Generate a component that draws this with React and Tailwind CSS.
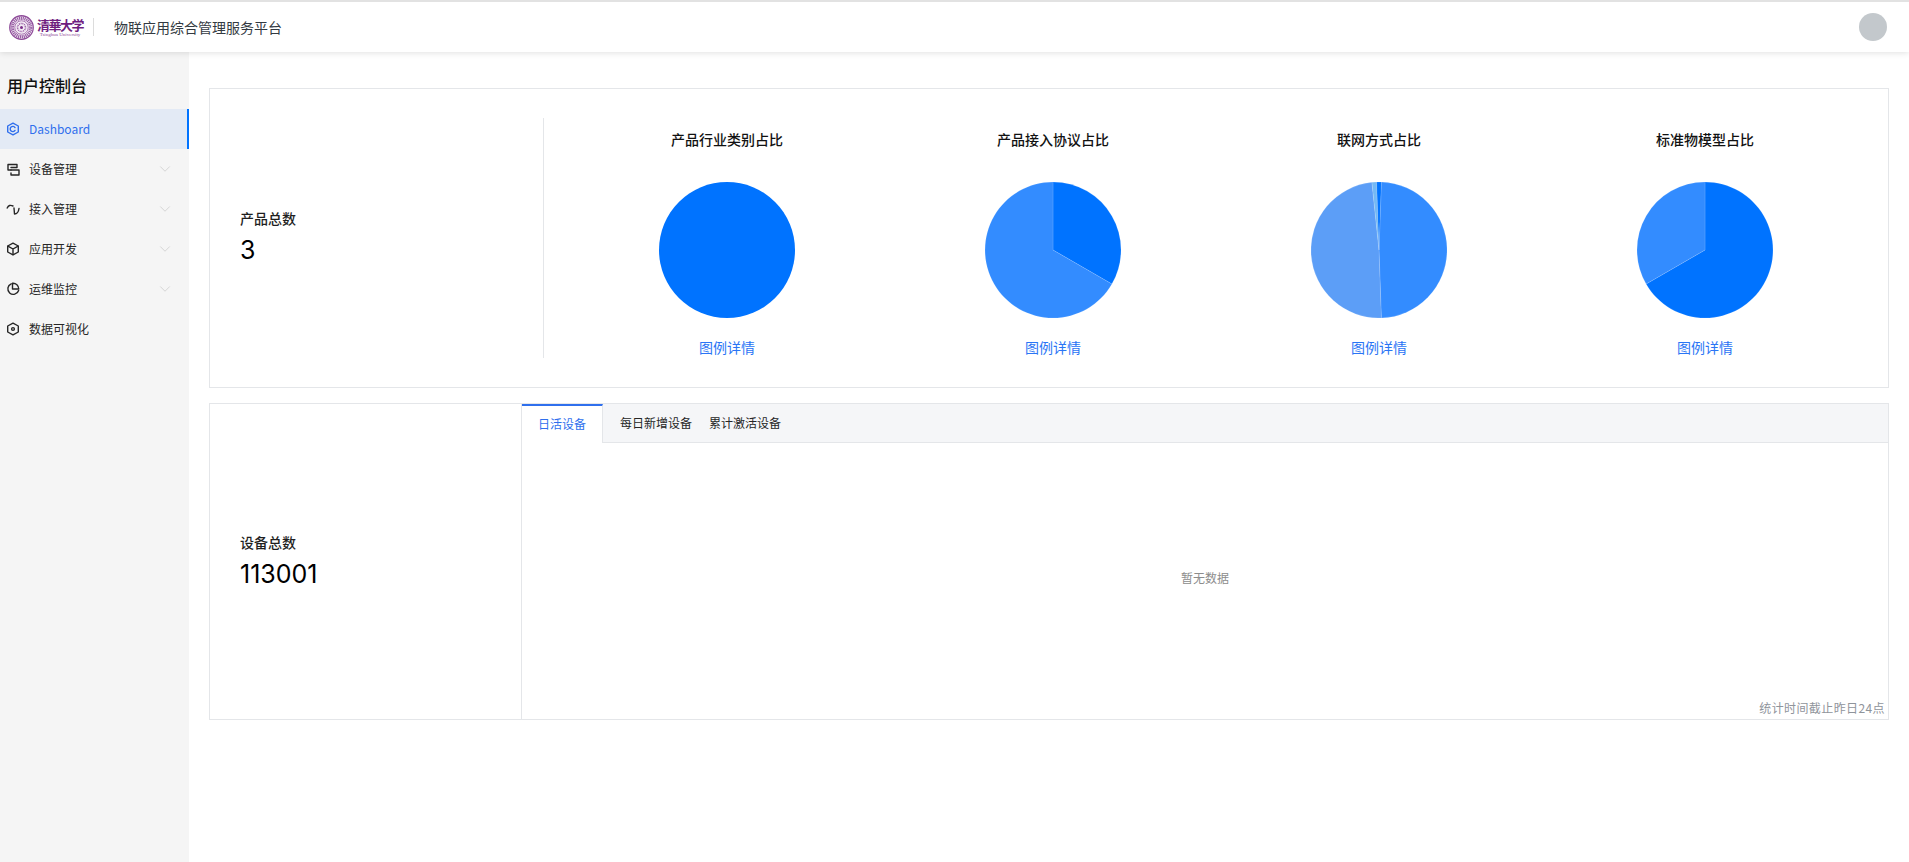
import React from 'react';
import { ChevronDown } from 'lucide-react';

const FONT = "font-['Noto_Sans_CJK_SC','Noto_Sans',sans-serif]";

// 饼图扇区路径
const slicePath = (from, to, r = 68) => {
  const pt = deg => {
    const a = (deg - 90) * Math.PI / 180;
    return `${(r + r * Math.cos(a)).toFixed(2)} ${(r + r * Math.sin(a)).toFixed(2)}`;
  };
  const large = to - from > 180 ? 1 : 0;
  return `M${r} ${r} L${pt(from)} A${r} ${r} 0 ${large} 1 ${pt(to)} Z`;
};

const charts = [
  { title: '产品行业类别占比', full: '#0073ff', slices: [] },
  { title: '产品接入协议占比', slices: [[0, 120, '#0073ff'], [120, 360, '#338cff']] },
  { title: '联网方式占比', slices: [[2, 178, '#338cff'], [178, 354, '#5c9ef7'], [354, 358, '#74b9f5'], [358, 362, '#0073ff']] },
  { title: '标准物模型占比', slices: [[0, 240, '#0073ff'], [240, 360, '#338cff']] }
];

const Pie = ({ chart }) => <svg width="136" height="136" viewBox="0 0 136 136">
    {chart.full && <circle cx="68" cy="68" r="68" fill={chart.full} />}
    {chart.slices.map(s => <path key={s[0]} d={slicePath(s[0], s[1])} fill={s[2]} stroke="#ffffff" strokeOpacity="0.25" strokeWidth="0.5" />)}
  </svg>;

const IconBase = ({ children, color = '#262626' }) => <svg width="14" height="14" viewBox="0 0 14 14" fill="none" stroke={color} strokeWidth="1.4" strokeLinecap="round" strokeLinejoin="round" className="shrink-0">
    {children}
  </svg>;

const menus = [
  { name: '设备管理', arrow: true, icon: <IconBase><path d="M5 8H2V2.5H11V5.5H5" /><path d="M5 8H13V13H5V11" /></IconBase> },
  { name: '接入管理', arrow: true, icon: <IconBase><path d="M1.2 6Q3 2 7 4" /><path d="M8 6L8.5 12C10.5 12 12.5 10 13 6.5" /></IconBase> },
  { name: '应用开发', arrow: true, icon: <IconBase><path d="M7 1.2L12.3 4V10L7 12.8L1.7 10V4Z" /><path d="M1.9 4.2L7 7L12.1 4.2M7 7V12.5" /></IconBase> },
  { name: '运维监控', arrow: true, icon: <IconBase><path d="M5.2 1.8A5.5 5.5 0 1 0 12.6 8.5" /><path d="M6.5 1.2A5.8 5.8 0 0 1 12.8 7H6.5Z" /></IconBase> },
  { name: '数据可视化', arrow: false, icon: <IconBase><path d="M7 1.2L12.3 4V10L7 12.8L1.7 10V4Z" /><circle cx="7" cy="7" r="1.4" /></IconBase> }
];

// 清华校徽
const Emblem = () => <svg width="25" height="25" viewBox="0 0 50 50" className="shrink-0">
    <circle cx="25" cy="25" r="23.5" fill="none" stroke="#8d4a98" strokeWidth="2.5" />
    <circle cx="25" cy="25" r="18.5" fill="none" stroke="#9a5fa6" strokeWidth="7" strokeDasharray="2.5 1.2" />
    <circle cx="25" cy="25" r="13.5" fill="#f3eaf4" stroke="#8d4a98" strokeWidth="1.5" />
    <circle cx="25" cy="25" r="8" fill="none" stroke="#9a5fa6" strokeWidth="3" strokeDasharray="2 1.5" />
    <circle cx="25" cy="25" r="3" fill="#7b2f88" />
  </svg>;

export default function App() {
  return <div className={`${FONT} flex h-[862px] flex-col overflow-hidden bg-white text-[#1f1f1f]`}>
      {/* 顶栏 */}
      <header className="relative z-10 flex h-[52px] shrink-0 items-center border-t-2 border-[#e2e2e2] bg-white pl-[9px] pr-[22px] shadow-[0_1px_6px_rgba(0,0,0,0.12)]">
        <Emblem />
        <div className="ml-[4px] flex w-[44px] flex-col items-center">
          <span className="text-[13px] leading-[15px] font-bold tracking-[-1.5px] whitespace-nowrap text-[#6f1d7f]">清華大学</span>
          <span className="font-['Liberation_Serif',serif] text-[5px] leading-[6px] whitespace-nowrap text-[#8d4a98]">Tsinghua University</span>
        </div>
        <div className="ml-[11px] h-[18px] w-px bg-[#dcdcdc]" />
        <span className="ml-[20px] text-[14px] text-[#333a42]">物联应用综合管理服务平台</span>
        <div className="ml-auto h-[28px] w-[28px] rounded-full bg-[#c3c8cc]" />
      </header>

      <div className="flex min-h-0 flex-1">
        {/* 侧边栏 */}
        <aside className="w-[189px] shrink-0 bg-[#f5f5f5]">
          <h2 className="flex h-[57px] items-end pb-[12px] pl-[7px] text-[16px] leading-[24px] font-medium text-[#111]">用户控制台</h2>
          <div className="flex h-[40px] items-center gap-[9px] border-r-2 border-[#0073ff] bg-[#e3eaf5] pl-[6px] text-[12px] text-[#2f6fed]">
            <IconBase color="#2f6fed">
              <path d="M7 1.2L12.3 4V10L7 12.8L1.7 10V4Z" />
              <path d="M9 5.6A2.6 2.6 0 1 0 9 8.4" />
            </IconBase>
            Dashboard
          </div>
          {menus.map(m => <div key={m.name} className="flex h-[40px] items-center gap-[9px] pl-[6px] pr-[15px] text-[12px] text-[#262626]">
              {m.icon}
              <span>{m.name}</span>
              {m.arrow && <ChevronDown size={18} strokeWidth={0.8} className="ml-auto text-[#bfbfbf]" />}
            </div>)}
        </aside>

        {/* 内容区 */}
        <main className="flex min-w-0 flex-1 flex-col gap-[15px] pl-[20px] pr-[20px] pt-[36px]">
          <section className="flex h-[300px] items-center border border-[#e4e6e9] pl-[30px] pr-[20px]">
            <div className="flex w-[303px] shrink-0 flex-col">
              <span className="text-[14px] leading-[20px] font-medium text-[#1f1f1f]">产品总数</span>
              <span className="mt-[4px] mb-[1px] font-['Inter',sans-serif] text-[25px] leading-[36px] text-black">3</span>
            </div>
            <div className="grid h-[240px] flex-1 grid-cols-4 border-l border-[#e4e6e9] pl-[20px]">
              {charts.map(c => <div key={c.title} className="flex flex-col items-center">
                  <h3 className="mt-[11px] text-[14px] leading-[20px] font-medium text-[#111]">{c.title}</h3>
                  <div className="mt-[33px]"><Pie chart={c} /></div>
                  <a className="mt-[19px] text-[14px] leading-[20px] text-[#2a75f5]">图例详情</a>
                </div>)}
            </div>
          </section>

          <section className="flex h-[317px] border border-[#e4e6e9]">
            <div className="flex w-[312px] shrink-0 flex-col justify-center border-r border-[#e4e6e9] pl-[30px] pt-[1px]">
              <span className="text-[14px] leading-[20px] font-medium text-[#1f1f1f]">设备总数</span>
              <span className="mt-[4px] font-['Inter',sans-serif] text-[25px] leading-[36px] text-black">113001</span>
            </div>
            <div className="relative flex min-w-0 flex-1 flex-col">
              <div className="flex h-[39px] shrink-0 items-stretch border-b border-[#e4e6e9] bg-[#f5f6f8] text-[12px] text-[#262626]">
                <div className="-mb-px flex w-[81px] items-center justify-center border-t-2 border-r border-t-[#2f6fed] border-r-[#e4e6e9] bg-white pb-[1px] text-[#2f6fed]">日活设备</div>
                <div className="flex items-center px-[17px]">每日新增设备</div>
                <div className="flex items-center">累计激活设备</div>
              </div>
              <div className="flex flex-1 items-center justify-center pb-[7px] text-[12px] text-[#8c8c8c]">暂无数据</div>
              <span className="absolute right-[3px] bottom-[2px] text-[12px] leading-[18px] tracking-[0.4px] text-[#8f949b]">统计时间截止昨日24点</span>
            </div>
          </section>
        </main>
      </div>
    </div>;
}
